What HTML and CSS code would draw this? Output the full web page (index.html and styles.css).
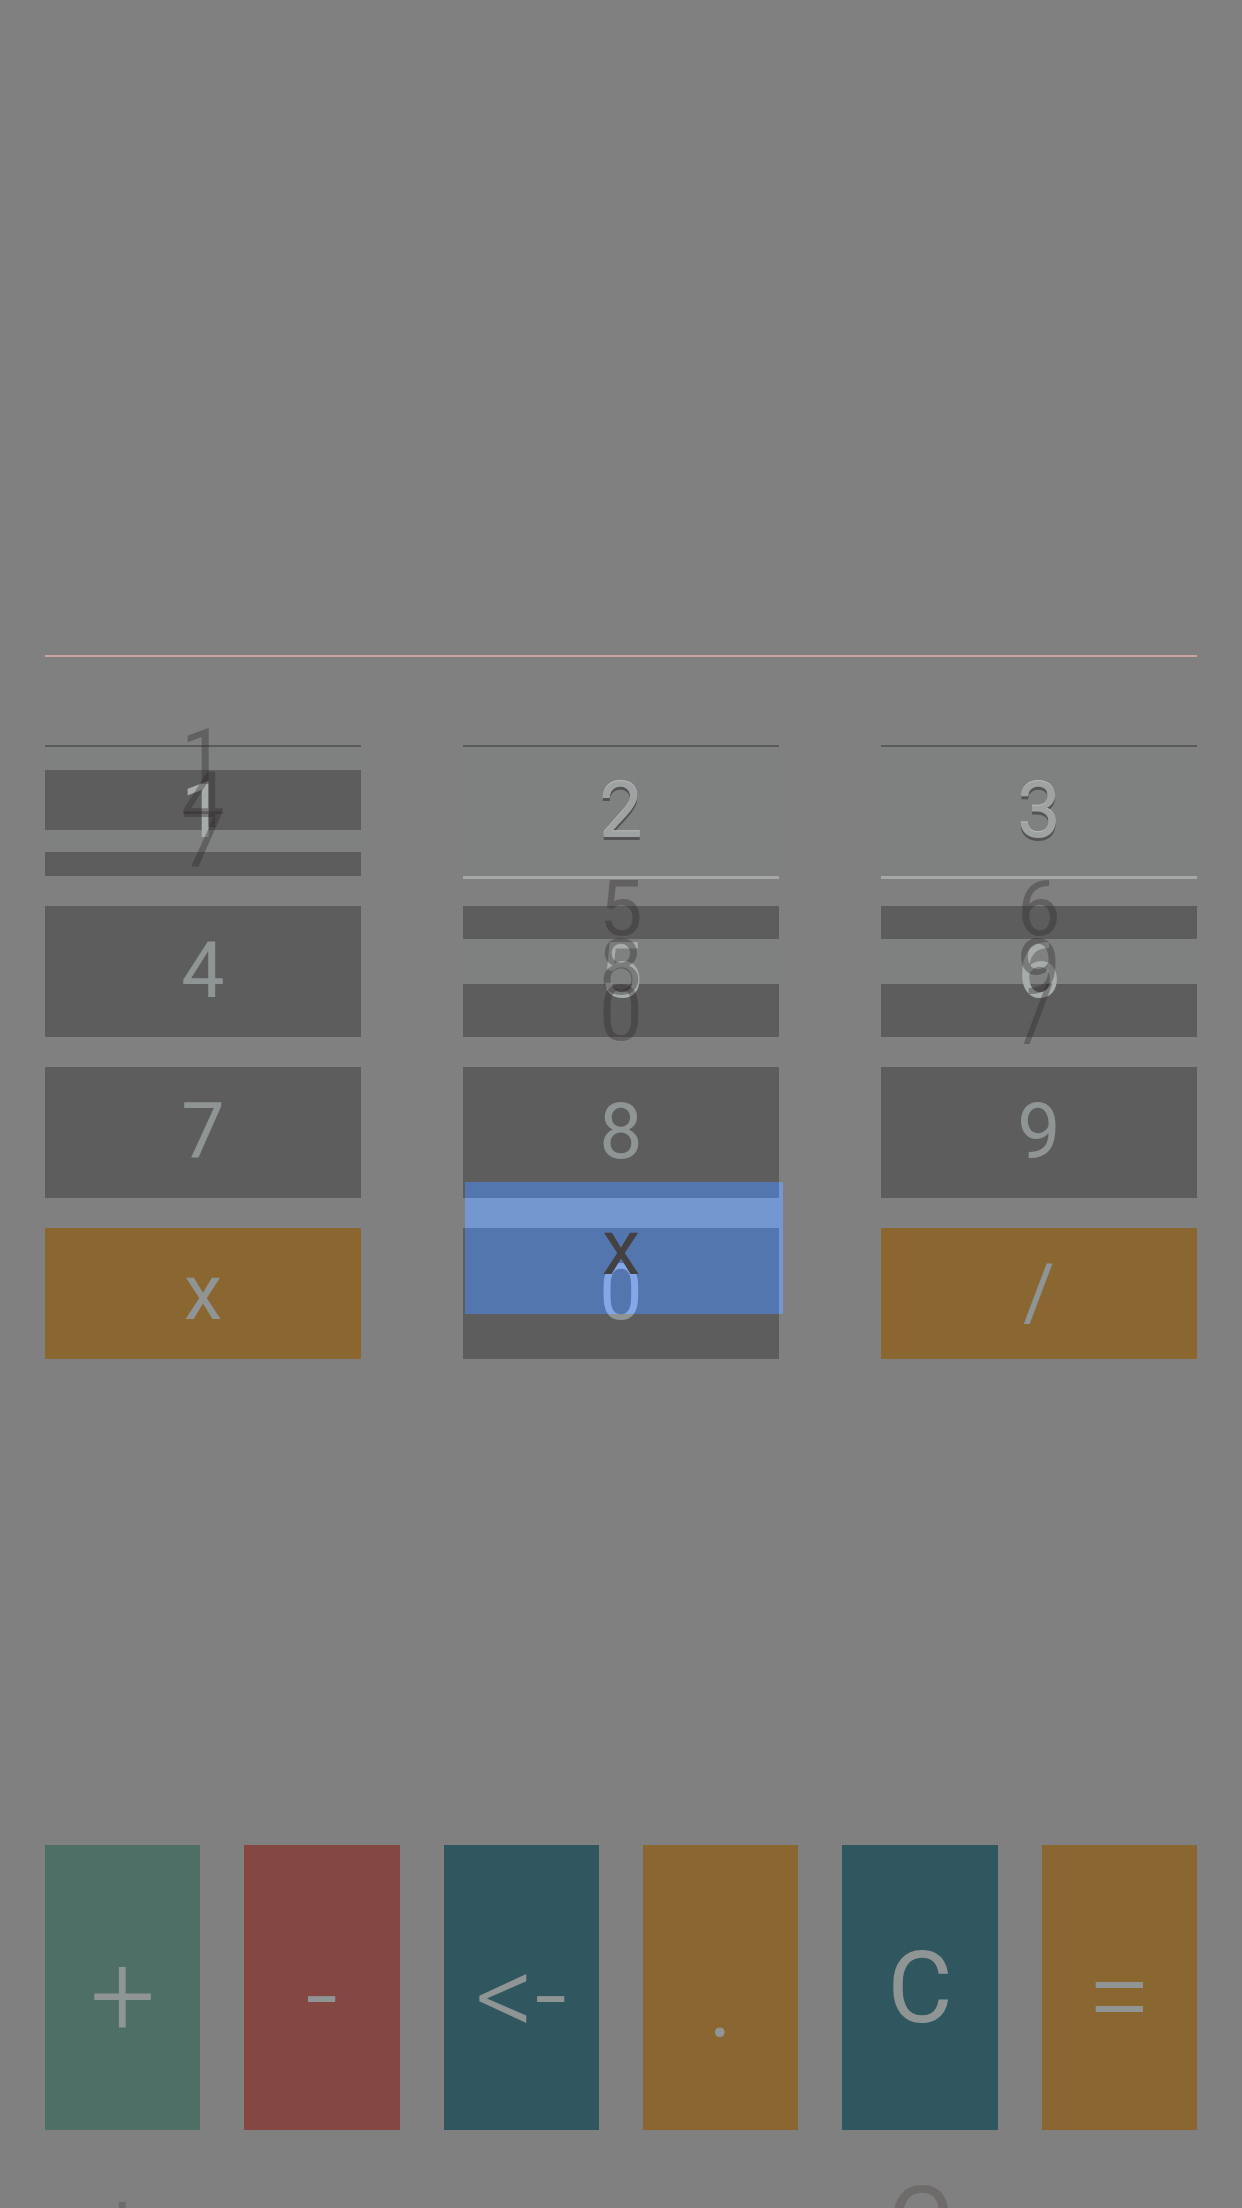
FILE: index.html
```html
<!DOCTYPE html>
<html lang="en">
<head>
<meta charset="utf-8">
<title>Calculator</title>
<link rel="stylesheet" href="styles.css">
</head>
<body>
<div class="app">
  <div class="display"></div>
  <div class="rule"></div>

  <div class="keypad">
    <div class="key k-band1"><span class="lbl bright">1</span></div>
    <div class="key k-light"><span class="lbl emboss">2</span></div>
    <div class="key k-light"><span class="lbl emboss">3</span></div>

    <div class="key"><span class="lbl">4</span></div>
    <div class="key k-band2"><span class="lbl bright">5</span></div>
    <div class="key k-band2"><span class="lbl bright">6</span></div>

    <div class="key"><span class="lbl">7</span></div>
    <div class="key"><span class="lbl">8</span></div>
    <div class="key"><span class="lbl">9</span></div>

    <div class="key op"><span class="lbl">x</span></div>
    <div class="key"><span class="lbl">0</span></div>
    <div class="key op"><span class="lbl">/</span></div>

    <span class="g c1 g1a">1</span>
    <span class="g c1 g1b">4</span>
    <span class="g c1 g1c">7</span>
    <span class="g c2 g2a">5</span>
    <span class="g c2 g2b">8</span>
    <span class="g c2 g2c">0</span>
    <span class="g c3 g3a">6</span>
    <span class="g c3 g3b">9</span>
    <span class="g c3 g3c">/</span>

    <div class="tint"><div class="tint-key"><span class="lbl tint-lbl">0</span></div></div>
    <span class="g c2 gx">x</span>
  </div>

  <div class="ops">
    <div class="opkey plus"><span class="olbl sym">+</span></div>
    <div class="opkey minus"><span class="olbl sym">-</span></div>
    <div class="opkey back"><span class="olbl sym">&lt;-</span></div>
    <div class="opkey dot"><span class="olbl sym">.</span></div>
    <div class="opkey clear"><span class="olbl">C</span></div>
    <div class="opkey equals"><span class="olbl sym">=</span></div>

    <div class="ops-ghost">
      <span class="og"><span class="olbl sym">+</span></span>
      <span class="og"><span class="olbl sym">-</span></span>
      <span class="og"><span class="olbl sym">&lt;-</span></span>
      <span class="og"><span class="olbl sym">.</span></span>
      <span class="og"><span class="olbl">C</span></span>
      <span class="og"><span class="olbl sym">=</span></span>
    </div>
  </div>
</div>
</body>
</html>
```

FILE: styles.css
```css
html, body {
  margin: 0;
  padding: 0;
  width: 1242px;
  height: 2208px;
  overflow: hidden;
  background: #808080;
}

.app {
  font-family: "Roboto", "Noto Sans", sans-serif;
  font-weight: 400;
  color: #8f9494;
}

.display {
  height: 655px;
}

.rule {
  height: 2px;
  margin: 0 45px;
  background: #c9a59d;
}

.keypad {
  position: relative;
  margin-top: 88px;
  padding: 0 45px;
  display: grid;
  grid-template-columns: repeat(3, 316px);
  grid-auto-rows: 131px;
  column-gap: 102px;
  row-gap: 30px;
}

.key {
  box-sizing: border-box;
  background: #5d5d5d;
  display: flex;
  align-items: center;
  justify-content: center;
}

.key.op {
  background: #8a6630;
}

.k-band1 {
  border-top: 2px solid #5a5a5a;
  background: linear-gradient(to bottom,
    #7f8180 0, #7f8180 23px,
    #5d5d5d 23px, #5d5d5d 83px,
    #7f8180 83px, #7f8180 105px,
    #5d5d5d 105px, #5d5d5d 100%);
}

.k-light {
  border-top: 2px solid #5a5a5a;
  background: #7f8180;
  box-shadow: 0 3px 0 #a6a7a7;
}

.k-band2 {
  background: linear-gradient(to bottom,
    #5d5d5d 0, #5d5d5d 33px,
    #7f8180 33px, #7f8180 78px,
    #5d5d5d 78px, #5d5d5d 100%);
}

.lbl {
  font-size: 77px;
  line-height: 77px;
}

.bright {
  color: #a6abab;
}

.emboss {
  color: #9ea2a2;
  text-shadow: 0 -1px 0 #b8bbbb, 0 3px 0 #555353;
}

/* ghost labels left over from the key transition */
.g {
  position: absolute;
  width: 316px;
  text-align: center;
  font-size: 77px;
  line-height: 77px;
  color: rgba(45, 40, 40, 0.36);
}

.c1 { left: 45px; }
.c2 { left: 463px; }
.c3 { left: 881px; }

.g1a { top: -25px; }
.g1b { top: 18px; }
.g1c { top: 58px; }
.g2a { top: 126px; }
.g2b { top: 185px; }
.g2c { top: 231px; }
.g3a { top: 126px; }
.g3b { top: 185px; }
.g3c { top: 230px; }

.gx {
  top: 465px;
  color: #434141;
}

.tint {
  position: absolute;
  left: 465px;
  top: 437px;
  width: 318px;
  height: 132px;
  box-sizing: border-box;
  border-right: 4px solid #7597cf;
  overflow: hidden;
  background: linear-gradient(to bottom,
    #5476ae 0, #5476ae 16px,
    #7597cf 16px, #7597cf 46px,
    #5476ae 46px, #5476ae 100%);
}

.tint-key {
  position: absolute;
  left: -2px;
  top: 46px;
  width: 316px;
  height: 131px;
  display: flex;
  align-items: center;
  justify-content: center;
}

.tint-lbl {
  color: #85a7e7;
}

.ops {
  position: relative;
  margin: 486px 45px 0;
  height: 285px;
  display: flex;
  gap: 44px;
}

.opkey {
  flex: 1;
  display: flex;
  align-items: center;
  justify-content: center;
}

.olbl {
  font-size: 100px;
  line-height: 100px;
}

.olbl.sym {
  font-size: 116px;
  line-height: 116px;
  font-weight: 300;
  margin-top: 16px;
}

.plus { background: #4e6f65; }
.minus { background: #844741; }
.back { background: #30575f; }
.dot { background: #8a6630; }
.clear { background: #30575f; }
.equals { background: #8a6630; }

.ops-ghost {
  position: absolute;
  left: 0;
  right: 0;
  top: 235px;
  height: 285px;
  display: flex;
  gap: 44px;
  color: #6f6b6b;
}

.og {
  flex: 1;
  display: flex;
  align-items: center;
  justify-content: center;
}
```
